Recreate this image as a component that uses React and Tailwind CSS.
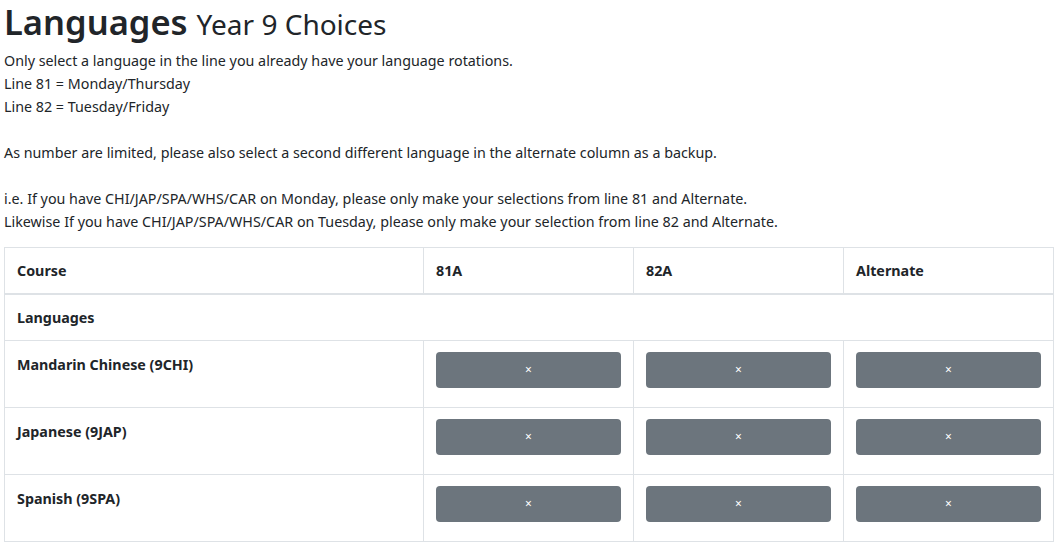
const rows = [
  { name: 'Mandarin Chinese (9CHI)' },
  { name: 'Japanese (9JAP)' },
  { name: 'Spanish (9SPA)' },
];

function ChoiceButton() {
  return (
    <button className="w-full h-[36px] rounded-[4px] bg-[#6c757d] text-white text-[12px] leading-none flex items-center justify-center">
      ×
    </button>
  );
}

export default function App() {
  return (
    <div className="bg-white text-[#212529] px-[4px] pt-[2px] text-[14.3px] leading-[23px]" style={{ fontFamily: '"Noto Sans", sans-serif' }}>
      <h1 className="text-[34.5px] leading-[40px] font-semibold mb-[5px]">
        Languages <small className="text-[28px] font-normal">Year 9 Choices</small>
      </h1>
      <p>Only select a language in the line you already have your language rotations.</p>
      <p>Line 81 = Monday/Thursday</p>
      <p>Line 82 = Tuesday/Friday</p>
      <p>&nbsp;</p>
      <p>As number are limited, please also select a second different language in the alternate column as a backup.</p>
      <p>&nbsp;</p>
      <p>i.e. If you have CHI/JAP/SPA/WHS/CAR on Monday, please only make your selections from line 81 and Alternate.</p>
      <p>Likewise If you have CHI/JAP/SPA/WHS/CAR on Tuesday, please only make your selection from line 82 and Alternate.</p>

      <table className="w-[1049px] mt-[14px] border-collapse border border-[#dee2e6] table-fixed">
        <colgroup>
          <col className="w-[419px]" />
          <col className="w-[210px]" />
          <col className="w-[210px]" />
          <col className="w-[210px]" />
        </colgroup>
        <thead>
          <tr className="h-[46px]">
            <th className="text-left font-bold px-[12px] border border-[#dee2e6] border-b-2">Course</th>
            <th className="text-left font-bold px-[12px] border border-[#dee2e6] border-b-2">81A</th>
            <th className="text-left font-bold px-[12px] border border-[#dee2e6] border-b-2">82A</th>
            <th className="text-left font-bold px-[12px] border border-[#dee2e6] border-b-2">Alternate</th>
          </tr>
        </thead>
        <tbody>
          <tr className="h-[47px]">
            <td colSpan={4} className="px-[12px] font-bold border border-[#dee2e6]">Languages</td>
          </tr>
          {rows.map((r) => (
            <tr key={r.name} className="h-[67px]">
              <td className="px-[12px] py-[12px] align-top font-bold border border-[#dee2e6]">{r.name}</td>
              <td className="px-[12px] py-[11px] align-top border border-[#dee2e6]"><ChoiceButton /></td>
              <td className="px-[12px] py-[11px] align-top border border-[#dee2e6]"><ChoiceButton /></td>
              <td className="px-[12px] py-[11px] align-top border border-[#dee2e6]"><ChoiceButton /></td>
            </tr>
          ))}
        </tbody>
      </table>
    </div>
  );
}
